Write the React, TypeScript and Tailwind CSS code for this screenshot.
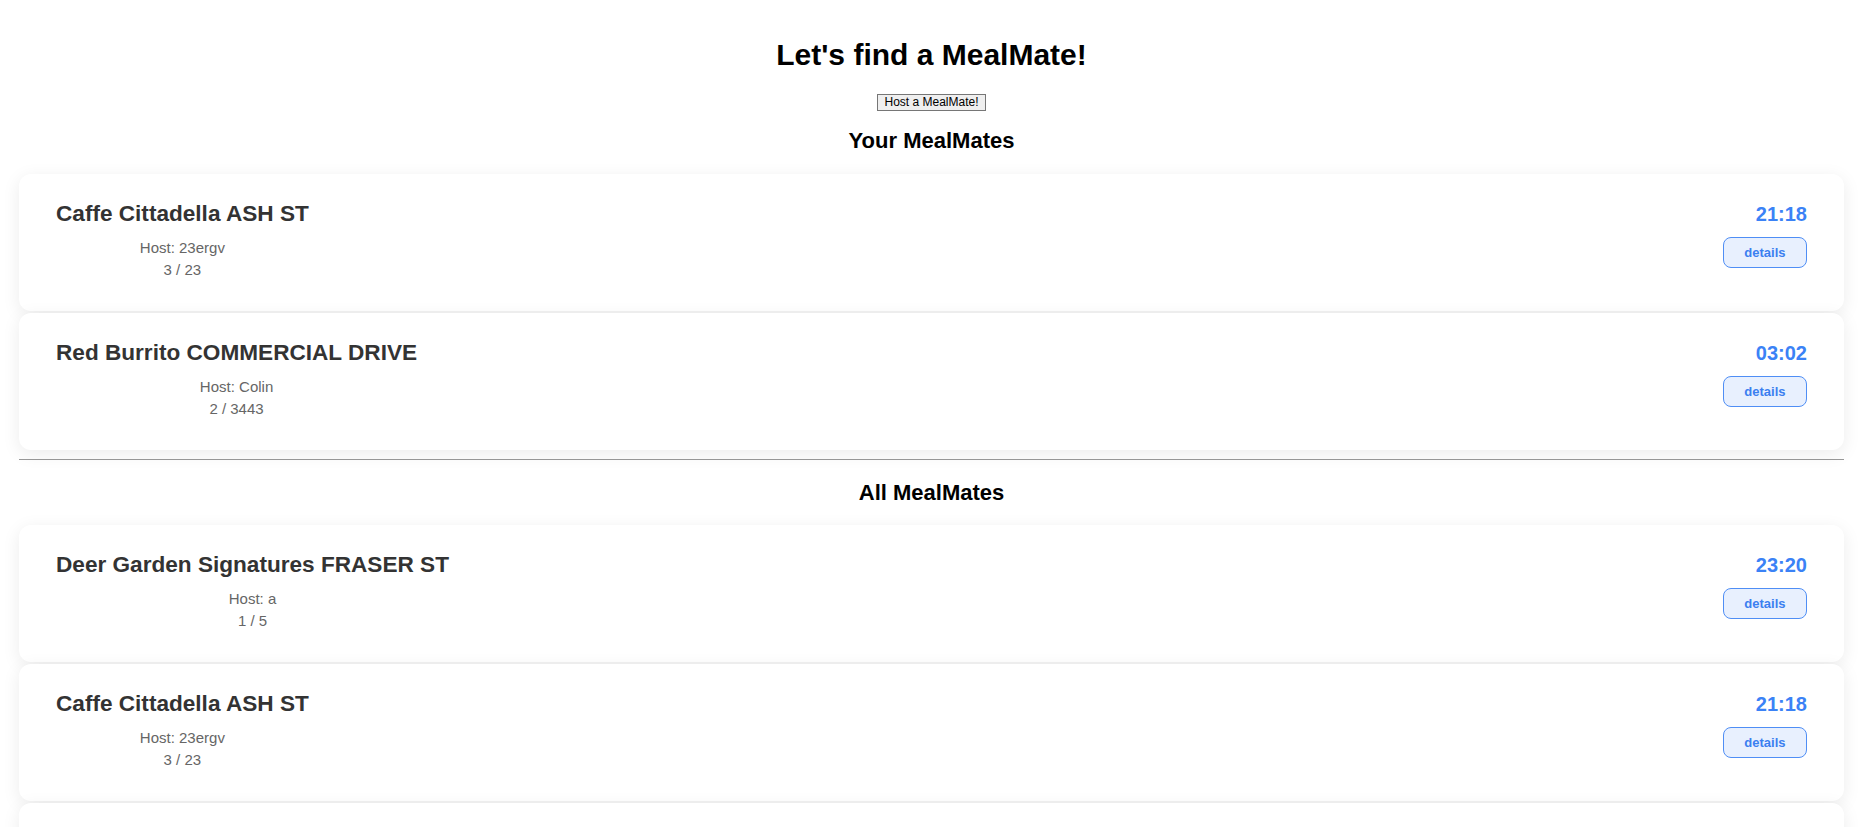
type Meal = {
  id: number;
  name: string;
  host: string;
  joined: number;
  capacity: number;
  time: string;
};

const yourMeals: Meal[] = [
  { id: 1, name: 'Caffe Cittadella ASH ST', host: '23ergv', joined: 3, capacity: 23, time: '21:18' },
  { id: 2, name: 'Red Burrito COMMERCIAL DRIVE', host: 'Colin', joined: 2, capacity: 3443, time: '03:02' },
];

const allMeals: Meal[] = [
  { id: 3, name: 'Deer Garden Signatures FRASER ST', host: 'a', joined: 1, capacity: 5, time: '23:20' },
  { id: 1, name: 'Caffe Cittadella ASH ST', host: '23ergv', joined: 3, capacity: 23, time: '21:18' },
  { id: 2, name: 'Red Burrito COMMERCIAL DRIVE', host: 'Colin', joined: 2, capacity: 3443, time: '03:02' },
];

function MealCard({ meal }: { meal: Meal }) {
  return (
    <div className="flex h-[137px] items-start justify-between rounded-[12px] bg-white pl-[37px] pr-[37px] pt-[27px] shadow-[0_4px_18px_rgba(0,0,0,0.08)]">
      <div className="flex flex-col items-center">
        <div className="text-[22.6px] font-bold leading-[26px] text-[#333]">{meal.name}</div>
        <div className="mt-[10px] text-[15px] leading-[22px] text-[#666]">Host: {meal.host}</div>
        <div className="text-[15px] leading-[22px] text-[#666]">
          {meal.joined} / {meal.capacity}
        </div>
      </div>
      <div className="flex flex-col items-end">
        <div className="mt-[1px] text-[20px] font-bold leading-[24px] text-[#3b82f6]">{meal.time}</div>
        <button
          type="button"
          className="mt-[11px] rounded-[8px] border border-[#4f8ef5] bg-[#e8f0fe] px-[20.5px] py-[7px] text-[13px] font-bold leading-[15px] text-[#3b7ff0]"
        >
          details
        </button>
      </div>
    </div>
  );
}

export default function App() {
  return (
    <div className="min-h-screen bg-white px-[19px] font-['Liberation_Sans',Arial,sans-serif] text-black">
      <h1 className="pt-[37px] text-center text-[30px] font-bold leading-[36px]">Let's find a MealMate!</h1>
      <div className="mt-[21px] flex justify-center">
        <button
          type="button"
          className="border border-[#767676] bg-[#efefef] px-[6px] py-[1px] text-[12px] leading-[13px] text-black"
        >
          Host a MealMate!
        </button>
      </div>
      <h2 className="mt-[17px] text-center text-[22px] font-bold leading-[26px]">Your MealMates</h2>
      <div className="mt-[20px] flex flex-col gap-[2px]">
        {yourMeals.map((meal) => (
          <MealCard key={meal.id} meal={meal} />
        ))}
      </div>
      <hr className="mt-[9px] border-t border-[#9a9a9a]" />
      <h2 className="mt-[20px] text-center text-[22px] font-bold leading-[26px]">All MealMates</h2>
      <div className="mt-[19px] flex flex-col gap-[2px] pb-[20px]">
        {allMeals.map((meal, i) => (
          <MealCard key={`${meal.id}-${i}`} meal={meal} />
        ))}
      </div>
    </div>
  );
}
